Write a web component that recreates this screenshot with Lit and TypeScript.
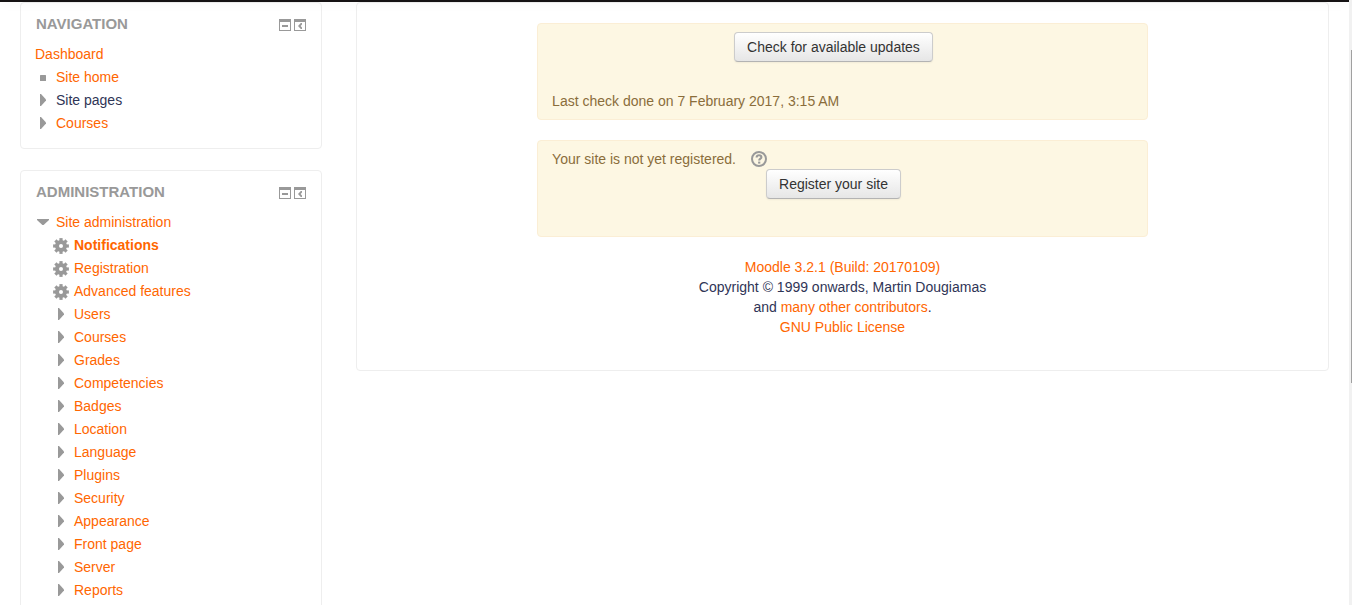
import { LitElement, html, svg, css, nothing, TemplateResult } from "lit";
import { customElement, property } from "lit/decorators.js";

type Marker = "none" | "leaf" | "closed" | "open" | "gear";

interface TreeItem {
  label: string;
  marker: Marker;
  plain?: boolean;
  active?: boolean;
  children?: TreeItem[];
}

const branch = (label: string): TreeItem => ({ label, marker: "closed" });

const NAVIGATION: TreeItem[] = [
  { label: "Dashboard", marker: "none" },
  { label: "Site home", marker: "leaf" },
  { label: "Site pages", marker: "closed", plain: true },
  { label: "Courses", marker: "closed" },
];

const ADMINISTRATION: TreeItem[] = [
  {
    label: "Site administration",
    marker: "open",
    children: [
      { label: "Notifications", marker: "gear", active: true },
      { label: "Registration", marker: "gear" },
      { label: "Advanced features", marker: "gear" },
      ...[
        "Users",
        "Courses",
        "Grades",
        "Competencies",
        "Badges",
        "Location",
        "Language",
        "Plugins",
        "Security",
        "Appearance",
        "Front page",
        "Server",
        "Reports",
      ].map(branch),
    ],
  },
];

const shapes: Record<Exclude<Marker, "none">, TemplateResult> = {
  leaf: svg`<rect x="5" y="7" width="6" height="6" rx="0.5" fill="currentColor" />`,
  closed: svg`<path d="M5 3h1l5 5.4v1.2L6 15H5z" fill="currentColor" />`,
  open: svg`<path d="M2 6h12v1l-5.4 5H7.4L2 7z" fill="currentColor" />`,
  gear: svg`
    <circle cx="8" cy="10" r="4" fill="none" stroke="currentColor" stroke-width="4" />
    <g stroke="currentColor" stroke-width="3.2">
      ${[0, 45, 90, 135, 180, 225, 270, 315].map(
        (a) => svg`<path d="M8 5.5V2.1" transform="rotate(${a} 8 10)" />`
      )}
    </g>`,
};

const base = css`
  a {
    color: #ff6600;
    text-decoration: none;
  }
  a:hover {
    text-decoration: underline;
  }
  button {
    font: inherit;
    cursor: pointer;
  }
  svg {
    display: block;
    flex: none;
  }
`;

@customElement("side-block")
export class SideBlock extends LitElement {
  @property() heading = "";
  @property({ attribute: false }) items: TreeItem[] = [];

  static styles = [
    base,
    css`
      :host {
        display: block;
        box-sizing: border-box;
        padding: 11px 14px 12px;
        border: 1px solid #eee;
        border-radius: 4px;
      }
      .head {
        display: flex;
        align-items: center;
        gap: 3px;
        margin-bottom: 10px;
        padding: 0 1px;
        color: #999;
      }
      .title {
        flex: 1;
        margin: 0;
        font-size: 15px;
        line-height: 20px;
        font-weight: bold;
        text-transform: uppercase;
      }
      .tool {
        padding: 0;
        border: 0;
        background: none;
        color: inherit;
      }
      .tree {
        margin: 0;
        padding: 0;
        list-style: none;
      }
      .tree .tree {
        padding-left: 18px;
      }
      .row {
        display: flex;
        align-items: center;
        gap: 5px;
        height: 20px;
        margin-bottom: 3px;
      }
      .marker {
        color: #999;
      }
      .plain {
        padding: 0;
        border: 0;
        background: none;
        color: #2f3556;
      }
      .active {
        font-weight: bold;
      }
    `,
  ];

  private renderItems(items: TreeItem[]): TemplateResult {
    return html`<ul class="tree">
      ${items.map(
        (item) => html`<li>
          <div class="row">
            ${item.marker === "none"
              ? nothing
              : html`<svg class="marker" width="16" height="18" viewBox="0 0 16 18" aria-hidden="true">
                  ${shapes[item.marker]}
                </svg>`}
            ${item.plain
              ? html`<button class="plain" type="button">${item.label}</button>`
              : html`<a class=${item.active ? "active" : ""} href="#">${item.label}</a>`}
          </div>
          ${item.children ? this.renderItems(item.children) : nothing}
        </li>`
      )}
    </ul>`;
  }

  render() {
    return html`
      <div class="head">
        <h2 class="title">${this.heading}</h2>
        <button class="tool" type="button" aria-label="Hide ${this.heading} block">
          <svg width="12" height="14" viewBox="0 0 12 14">
            <path d="M0 2h12v12H0zM1 5v8h10V5z" fill="currentColor" fill-rule="evenodd" />
            <path d="M3 8h6v2H3z" fill="currentColor" />
          </svg>
        </button>
        <button class="tool" type="button" aria-label="Dock ${this.heading} block">
          <svg width="12" height="14" viewBox="0 0 12 14">
            <path d="M0 2h12v12H0zM1 5v8h10V5z" fill="currentColor" fill-rule="evenodd" />
            <path d="M8 6v1.6L6.6 9 8 10.4V12H6.8L4 9l2.8-3z" fill="currentColor" />
          </svg>
        </button>
      </div>
      ${this.renderItems(this.items)}
    `;
  }
}

@customElement("app-root")
export class AppRoot extends LitElement {
  static styles = [
    base,
    css`
      :host {
        display: grid;
        grid-template-columns: 1fr 3px;
        height: 100vh;
        overflow: hidden;
        background: #fff;
        color: #2f3556;
        font: 14px/20px "Liberation Sans", Arial, sans-serif;
      }
      .page {
        min-width: 0;
        min-height: 0;
      }
      .topbar {
        position: relative;
        height: 2px;
        background: #151213;
        box-shadow: 0 1px 10px rgba(0, 0, 0, 0.1);
      }
      .columns {
        display: grid;
        grid-template-columns: 302fr 973fr;
        align-items: start;
        gap: 34px;
        padding: 0 20px;
      }
      .side {
        display: grid;
        gap: 21px;
      }
      .main {
        padding: 20px 19px 33px;
        border: 1px solid #eee;
        border-radius: 4px;
      }
      .notice {
        width: 60%;
        margin: 0 auto 20px;
        padding: 8px 35px 8px 14px;
        border: 1px solid #fbeed5;
        border-radius: 4px;
        background: #fdf7e3;
        color: #8a6d3b;
      }
      .notice p {
        margin: 0;
      }
      .action {
        display: flex;
        justify-content: center;
        padding-left: 3px;
      }
      .gap-after {
        margin-bottom: 29px;
      }
      .btn {
        padding: 4px 12px;
        border: 1px solid #ccc;
        border-bottom-color: #b3b3b3;
        border-radius: 4px;
        background: linear-gradient(#fff, #e6e6e6);
        box-shadow: inset 0 1px 0 rgba(255, 255, 255, 0.2), 0 1px 2px rgba(0, 0, 0, 0.05);
        color: #333;
      }
      .status {
        display: flex;
        align-items: center;
        gap: 15px;
      }
      .help {
        color: #999;
      }
      .credits {
        text-align: center;
      }
      .scroll {
        display: flex;
        justify-content: flex-end;
        background: #f1f1f1;
      }
      .thumb {
        width: 1px;
        height: 55%;
        margin-top: 50px;
        background: #a0a0a0;
      }
    `,
  ];

  render() {
    return html`
      <div class="page">
        <header class="topbar"></header>
        <div class="columns">
          <aside class="side">
            <side-block heading="Navigation" .items=${NAVIGATION}></side-block>
            <side-block heading="Administration" .items=${ADMINISTRATION}></side-block>
          </aside>
          <main class="main">
            <section class="notice">
              <div class="action gap-after">
                <button class="btn" type="button">Check for available updates</button>
              </div>
              <p>Last check done on 7 February 2017, 3:15 AM</p>
            </section>
            <section class="notice">
              <div class="status">
                <p>Your site is not yet registered.</p>
                <a class="help" href="#" aria-label="Help with registration">
                  <svg width="16" height="16" viewBox="0 0 16 16">
                    <circle cx="8" cy="8" r="7" fill="none" stroke="currentColor" stroke-width="2" />
                    <path
                      d="M5.6 6.5C5.6 4.9 6.6 4.3 8 4.3s2.4.7 2.4 1.9c0 1.5-2.2 1.5-2.2 3.4"
                      fill="none"
                      stroke="currentColor"
                      stroke-width="2.1"
                    />
                    <rect x="7.1" y="10.6" width="2.2" height="2" fill="currentColor" />
                  </svg>
                </a>
              </div>
              <div class="action gap-after">
                <button class="btn" type="button">Register your site</button>
              </div>
            </section>
            <footer class="credits">
              <a href="#">Moodle 3.2.1 (Build: 20170109)</a><br />
              Copyright © 1999 onwards, Martin Dougiamas<br />
              and <a href="#">many other contributors</a>.<br />
              <a href="#">GNU Public License</a>
            </footer>
          </main>
        </div>
      </div>
      <div class="scroll" aria-hidden="true"><div class="thumb"></div></div>
    `;
  }
}
